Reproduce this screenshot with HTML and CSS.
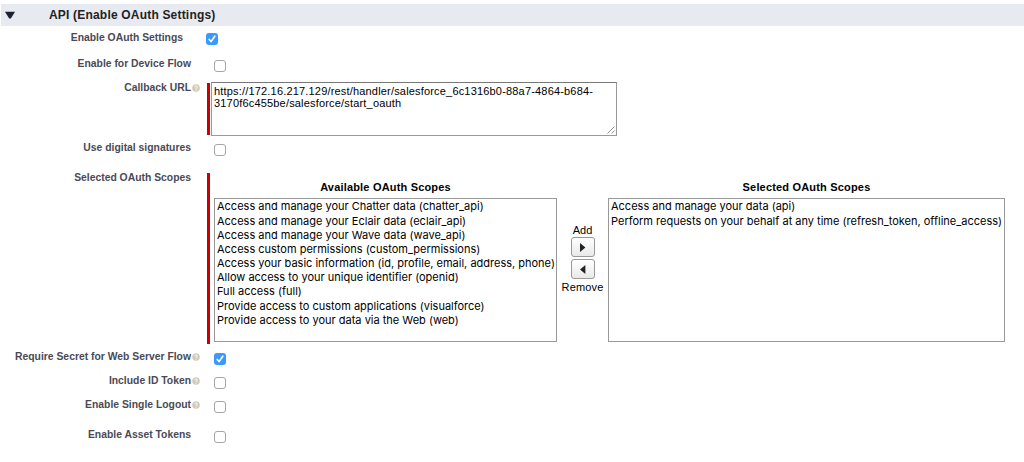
FILE: index.html
```
<!DOCTYPE html>
<html lang="en">
<head>
<meta charset="utf-8">
<title>API (Enable OAuth Settings)</title>
<link rel="stylesheet" href="styles.css">
</head>
<body>
<svg class="defs" width="0" height="0">
  <symbol id="help" viewBox="0 0 8 8"><circle cx="4" cy="4" r="3.8" fill="#d5c9b4"/><path d="M2.7 3.1C2.8 1.5 5.4 1.6 5.3 3.1C5.2 4 4 3.9 4 5M4 5.6V6.5" fill="none" stroke="#fff" stroke-width="1"/></symbol>
  <symbol id="tick" viewBox="0 0 12 12"><path d="M3.2 6.4L5.1 8.6L8.8 3.2" fill="none" stroke="#fff" stroke-width="1.6" stroke-linecap="round" stroke-linejoin="round"/></symbol>
</svg>
<h3 class="section"><svg class="twisty" width="10" height="8" viewBox="0 0 10 8"><path d="M0 .7H10L5.8 7.4H4.2Z" fill="#1d2030"/></svg><span>API (Enable OAuth Settings)</span></h3>
<div class="row r-enable"><div class="label">Enable OAuth Settings</div><span class="help"></span><span class="check on"><svg><use href="#tick"/></svg></span></div>
<div class="row"><div class="label">Enable for Device Flow</div><span class="help"></span><span class="check"></span></div>
<div class="row r-callback"><div class="label">Callback URL</div><svg class="help"><use href="#help"/></svg>
  <div class="required url">
    <div class="textarea">https://172.16.217.129/rest/handler/salesforce_6c1316b0-88a7-4864-b684-<br>3170f6c455be/salesforce/start_oauth
      <svg class="grip" width="8" height="8" viewBox="0 0 8 8"><path d="M.5 7.5L7.5 .5M4.5 7.5L7.5 4.5" stroke="#777" stroke-width=".8"/></svg></div>
  </div></div>
<div class="row r-digital"><div class="label">Use digital signatures</div><span class="help"></span><span class="check"></span></div>
<div class="row r-scopes"><div class="label">Selected OAuth Scopes</div><span class="help"></span>
  <div class="required scopes">
    <div class="available">
      <div class="heading">Available OAuth Scopes</div>
      <ul class="list">
        <li>Access and manage your Chatter data (chatter_api)</li>
        <li class="gap">Access and manage your Eclair data (eclair_api)</li>
        <li>Access and manage your Wave data (wave_api)</li>
        <li>Access custom permissions (custom_permissions)</li>
        <li>Access your basic information (id, profile, email, address, phone)</li>
        <li>Allow access to your unique identifier (openid)</li>
        <li>Full access (full)</li>
        <li class="gap">Provide access to custom applications (visualforce)</li>
        <li>Provide access to your data via the Web (web)</li>
      </ul>
    </div>
    <div class="transfer">
      <span>Add</span>
      <span class="btn"><svg width="7" height="9" viewBox="0 0 7 9"><path d="M1 0L6.4 4.5L1 9Z" fill="#222"/></svg></span>
      <span class="btn"><svg width="7" height="9" viewBox="0 0 7 9"><path d="M6.4 0L1 4.5L6.4 9Z" fill="#222"/></svg></span>
      <span class="remove">Remove</span>
    </div>
    <div class="selected">
      <div class="heading">Selected OAuth Scopes</div>
      <ul class="list">
        <li>Access and manage your data (api)</li>
        <li class="gap">Perform requests on your behalf at any time (refresh_token, offline_access)</li>
      </ul>
    </div>
  </div></div>
<div class="row"><div class="label">Require Secret for Web Server Flow</div><svg class="help"><use href="#help"/></svg><span class="check on"><svg><use href="#tick"/></svg></span></div>
<div class="row"><div class="label">Include ID Token</div><svg class="help"><use href="#help"/></svg><span class="check"></span></div>
<div class="row r-logout"><div class="label">Enable Single Logout</div><svg class="help"><use href="#help"/></svg><span class="check"></span></div>
<div class="row"><div class="label">Enable Asset Tokens</div><span class="help"></span><span class="check"></span></div>
</body>
</html>
```
FILE: styles.css
```
* { box-sizing: border-box; }
body { margin: 0; padding-top: 4px; background: #fff; color: #000; font-family: "Liberation Sans", Arial, sans-serif; font-size: 11px; overflow: hidden; }
.defs { display: block; height: 0; }
.section { display: flex; align-items: center; height: 22px; margin: 0 0 0 1px; padding-left: 4px; background: #e8eaf2; color: #222; font-size: 12px; line-height: 22px; letter-spacing: .19px; }
.twisty { margin-right: 34px; }
.row { display: flex; align-items: flex-start; height: 24px; padding-top: 5px; }
.label { width: 191px; text-align: right; font-size: 10.36px; font-weight: bold; color: #4a4a56; line-height: 14px; white-space: nowrap; }
.help { width: 8px; height: 8px; margin: 3px 0 0 1px; }
.check { width: 12px; height: 12px; margin: 3px 0 0 14px; border: 1px solid #a6a6a6; border-radius: 3px; background: #fff; }
.check svg { display: block; width: 12px; height: 12px; }
.check.on { border: 0; background: #3b99fc; }
.r-enable { height: 26px; }
.r-enable .label { width: 183px; }
.r-enable .check { margin-top: 2px; }
.r-callback { height: 60px; }
.r-digital, .r-logout { height: 30px; }
.r-scopes { height: 179px; }
.required { margin-left: 7px; border-left: 3px solid #c00; }
.url { height: 52px; margin-top: 2px; }
.textarea { position: relative; width: 406px; height: 54px; margin: -1px 0 0 1px; padding: 2px; border: 1px solid #999; border-top-color: #777; line-height: 12px; letter-spacing: .18px; white-space: nowrap; }
.grip { position: absolute; right: 1px; bottom: 1px; }
.scopes { display: flex; height: 171px; margin-top: 2px; padding: 7px 0 0 4px; }
.heading { height: 18px; line-height: 14px; text-align: center; font-weight: bold; letter-spacing: .18px; }
.available { width: 343px; }
.selected { width: 397px; }
.list { height: 144px; margin: 0; padding: 0 2px; list-style: none; border: 1px solid #999; font-family: Inter, sans-serif; font-size: 11px; line-height: 14px; white-space: nowrap; }
.list .gap { margin-top: 1px; }
.transfer { display: flex; flex-direction: column; align-items: center; width: 51px; padding-top: 43px; line-height: 14px; }
.btn { display: flex; align-items: center; justify-content: center; width: 24px; height: 20px; margin-bottom: 2px; border: 1px solid #999; border-radius: 3px; background: linear-gradient(#fff, #e9e9e9); }
.remove { margin-top: -1px; letter-spacing: .15px; }
```
